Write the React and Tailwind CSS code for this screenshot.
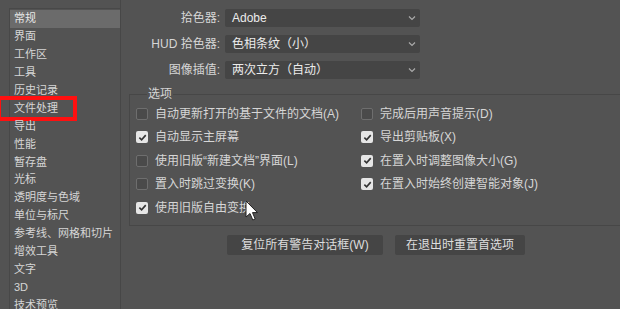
import React from "react";

const navItems = [
  "常规", "界面", "工作区", "工具", "历史记录", "文件处理", "导出", "性能", "暂存盘", "光标",
  "透明度与色域", "单位与标尺", "参考线、网格和切片", "增效工具", "文字", "3D", "技术预览",
];

const leftOpts = [
  { label: "自动更新打开的基于文件的文档(A)", checked: false },
  { label: "自动显示主屏幕", checked: true },
  { label: "使用旧版“新建文档”界面(L)", checked: false },
  { label: "置入时跳过变换(K)", checked: false },
  { label: "使用旧版自由变换", checked: true },
];

const rightOpts = [
  { label: "完成后用声音提示(D)", checked: false },
  { label: "导出剪贴板(X)", checked: true },
  { label: "在置入时调整图像大小(G)", checked: true },
  { label: "在置入时始终创建智能对象(J)", checked: true },
];

const Check = ({ checked }) =>
  checked ? (
    <span className="w-[12px] h-[12px] rounded-[2px] bg-[#e6e6e6] flex items-center justify-center shrink-0">
      <svg width="9" height="9" viewBox="0 0 10 10">
        <path d="M1.5 5.2 L4 7.6 L8.6 2.4" fill="none" stroke="#333" strokeWidth="1.8" />
      </svg>
    </span>
  ) : (
    <span className="w-[12px] h-[12px] rounded-[2px] border border-[#6e6e6e] bg-[#4a4a4a] shrink-0" />
  );

const Opt = ({ label, checked }) => (
  <div className="h-[23.5px] flex items-center gap-[7px]">
    <Check checked={checked} />
    <span className="whitespace-nowrap">{label}</span>
  </div>
);

const Select = ({ label, value }) => (
  <div className="flex items-center h-[26px]">
    <span className="w-[95px] text-right pr-[5px]">{label}</span>
    <div className="w-[195px] h-[18px] bg-[#454545] rounded-[2px] flex items-center justify-between pl-[7px] pr-[4px]">
      <span className="text-[#ececec]">{value}</span>
      <svg width="8" height="6" viewBox="0 0 8 6">
        <path d="M1 1.5 L4 4.5 L7 1.5" fill="none" stroke="#aaa" strokeWidth="1.2" />
      </svg>
    </div>
  </div>
);

export default function App() {
  return (
    <div
      className="w-[620px] h-[309px] bg-[#535353] text-[#d6d6d6] text-[12px] leading-none flex overflow-hidden relative"
      style={{ fontFamily: '"Liberation Sans", "Noto Sans CJK SC", sans-serif' }}
    >
      <div className="w-[120px] shrink-0 pt-[8px] pl-[9px]">
        <div className="h-full bg-[#535353] border-l border-t border-[#484848] pt-[1px] text-[11px]">
          {navItems.map((t, i) => (
            <div
              key={t}
              className={`h-[17.9px] flex items-center pl-[4px] whitespace-nowrap relative ${i === 0 ? "bg-[#6b6b6b] text-[#e8e8e8]" : ""}`}
            >
              {t}
              {i === 5 && (
                <span className="absolute left-[-13px] top-[-3px] w-[80px] h-[25px] border-[4px] border-[#ff1010]" />
              )}
            </div>
          ))}
        </div>
      </div>
      <div className="flex-1 border-l border-[#474747] flex flex-col">
        <div className="pt-[5px] pl-[9px] flex flex-col">
          <Select label="拾色器:" value="Adobe" />
          <Select label="HUD 拾色器:" value="色相条纹（小）" />
          <Select label="图像插值:" value="两次立方（自动）" />
        </div>
        <div className="ml-[8px] mt-[11px] h-[132px] border-t border-b border-l border-[#474747] relative pt-[7px] pl-[6px] flex gap-[13px]">
          <span className="absolute left-[17px] top-[-7px] bg-[#535353] px-[1px]">选项</span>
          <div className="w-[212px]">
            {leftOpts.map((o) => (
              <Opt key={o.label} {...o} />
            ))}
          </div>
          <div>
            {rightOpts.map((o) => (
              <Opt key={o.label} {...o} />
            ))}
          </div>
        </div>
        <div className="mt-[9px] pl-[106px] flex gap-[12px]">
          <button className="w-[156px] h-[20px] bg-[#454545] rounded-[2px] text-[#dedede]">复位所有警告对话框(W)</button>
          <button className="w-[130px] h-[20px] bg-[#454545] rounded-[2px] text-[#dedede]">在退出时重置首选项</button>
        </div>
      </div>
      <svg className="absolute left-[245px] top-[200px]" width="14" height="22" viewBox="0 0 14 22">
        <path d="M1 1 L1 17 L5 13.5 L7.8 20 L10.2 19 L7.5 12.6 L12.5 12.6 Z" fill="#fff" stroke="#222" strokeWidth="1" />
      </svg>
    </div>
  );
}
